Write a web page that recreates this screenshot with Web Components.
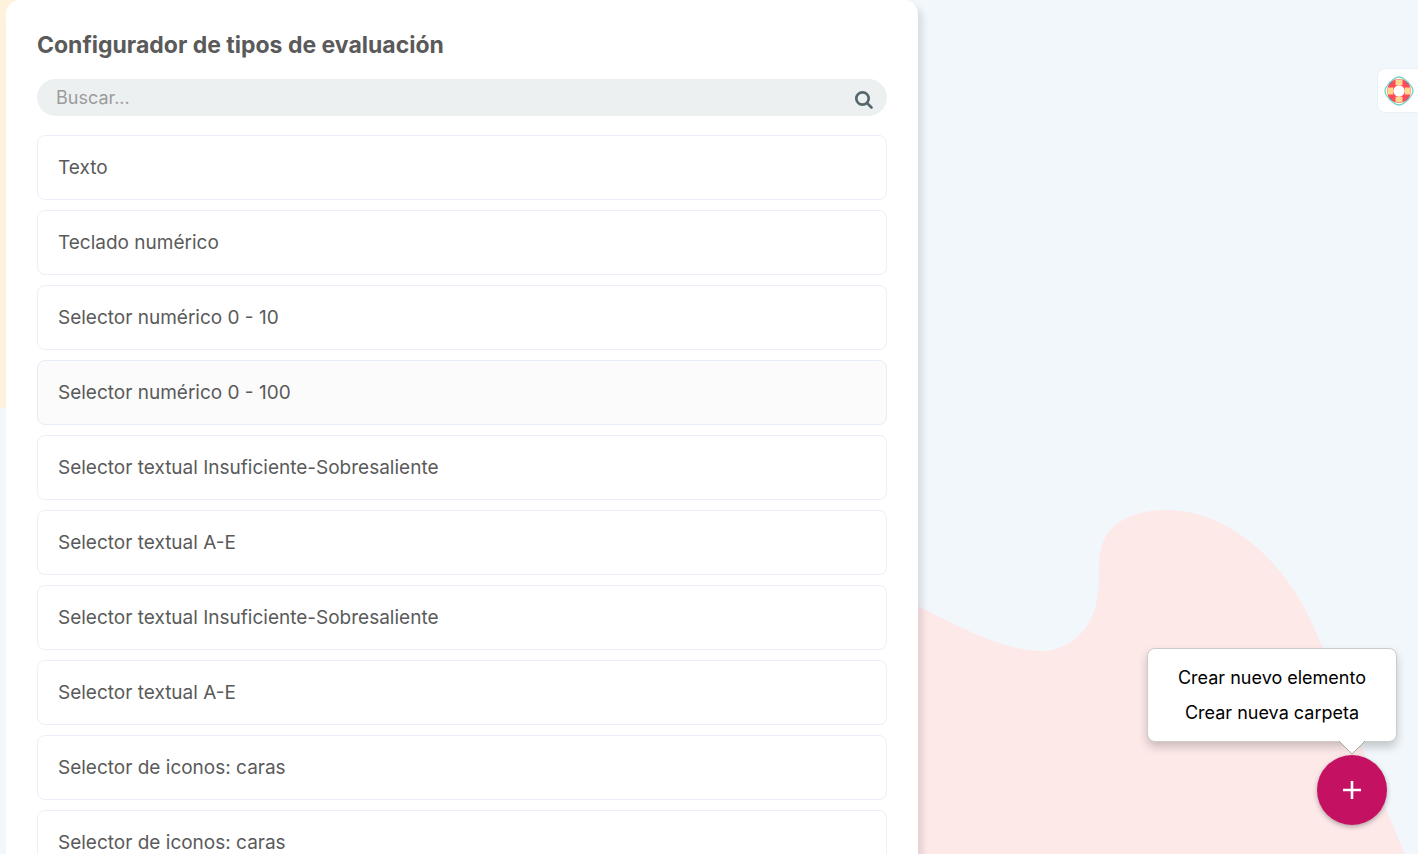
<!DOCTYPE html>
<html lang="es">
<head>
<meta charset="utf-8">
<meta name="viewport" content="width=device-width, initial-scale=1">
<title>Configurador de tipos de evaluación</title>
<style>
  body { margin: 0; font-family: Inter, "Liberation Sans", sans-serif; color: #5a5a5a; }
</style>
</head>
<body>
<evaluation-app>
  <type-panel heading="Configurador de tipos de evaluación">
    <search-field slot="search"></search-field>
    <type-item>Texto</type-item>
    <type-item>Teclado numérico</type-item>
    <type-item>Selector numérico 0 - 10</type-item>
    <type-item active>Selector numérico 0 - 100</type-item>
    <type-item>Selector textual Insuficiente-Sobresaliente</type-item>
    <type-item>Selector textual A-E</type-item>
    <type-item>Selector textual Insuficiente-Sobresaliente</type-item>
    <type-item>Selector textual A-E</type-item>
    <type-item>Selector de iconos: caras</type-item>
    <type-item>Selector de iconos: caras</type-item>
  </type-panel>
  <help-tab slot="overlay"></help-tab>
  <create-menu slot="overlay">
    <menu-option>Crear nuevo elemento</menu-option>
    <menu-option>Crear nueva carpeta</menu-option>
  </create-menu>
</evaluation-app>

<script>
  const define = (name, html, setup) => {
    const template = document.createElement('template');
    template.innerHTML = html;
    customElements.define(name, class extends HTMLElement {
      constructor() {
        super();
        this.attachShadow({ mode: 'open' }).append(template.content.cloneNode(true));
      }
      connectedCallback() {
        if (setup) setup(this, this.shadowRoot);
      }
    });
  };

  define('evaluation-app', `
    <style>
      :host { display: block; position: relative; height: 100vh; overflow: hidden; background: #f1f7fb; }
      .backdrop { position: absolute; display: block; pointer-events: none; }
      .sand { left: 0; top: 0; width: 50%; height: 408px; background: #fef2dc; }
      .wave { right: 0; bottom: 0; width: 518px; height: 354px; }
      main { position: relative; display: grid; height: 100%; box-sizing: border-box; padding-left: 6px;
             grid-template-columns: minmax(0, 912fr) minmax(0, 500fr); }
    </style>
    <div class="backdrop sand"></div>
    <svg class="backdrop wave" viewBox="900 500 518 354" aria-hidden="true">
      <path fill="#fee9e9" d="M900 598 C945 617 995 651 1043 651 C1067 651 1089 631 1095 608 C1102 583 1096 567 1101 549 C1107 522 1134 510 1167 510 C1223 510 1279 554 1309 617 C1341 684 1366 765 1405 854 L900 854 Z"/>
    </svg>
    <main><slot></slot></main>
    <slot name="overlay"></slot>`);

  define('type-panel', `
    <style>
      :host { display: block; box-sizing: border-box; height: 100%; overflow: hidden; padding: 31px 31px 0;
              background: #fff; border-radius: 14px 14px 0 0; box-shadow: 5px 5px 6px rgba(0, 0, 0, .1); }
      h1 { margin: 0 0 20px; font-size: 23px; line-height: 28px; font-weight: 700; }
      .list { display: flex; flex-direction: column; gap: 10px; margin-top: 19px; }
    </style>
    <h1></h1>
    <slot name="search"></slot>
    <div class="list" role="list"><slot></slot></div>`,
    (host, root) => { root.querySelector('h1').textContent = host.getAttribute('heading'); });

  define('search-field', `
    <style>
      :host { display: block; }
      form { display: flex; align-items: center; height: 37px; box-sizing: border-box; padding: 0 13px 0 19px;
             background: #ecf0f1; border-radius: 19px; }
      input { flex: 1; min-width: 0; padding: 0; border: 0; outline: 0; background: none;
              font: inherit; font-size: 18px; line-height: 24px; color: #5a5a5a; }
      input::placeholder { color: #9b9b9b; opacity: 1; }
      button { display: flex; padding: 4px 0 0; border: 0; background: none; color: #56666d; cursor: pointer; }
    </style>
    <form role="search">
      <input type="search" placeholder="Buscar..." aria-label="Buscar">
      <button type="button" aria-label="Iniciar búsqueda">
        <svg width="20" height="20" viewBox="0 0 20 20" fill="none" stroke="currentColor" stroke-width="2.7" aria-hidden="true">
          <circle cx="8.5" cy="8.5" r="6.2"/><path d="M13 13l4.5 4.5" stroke-linecap="round"/>
        </svg>
      </button>
    </form>`);

  define('type-item', `
    <style>
      :host { display: block; }
      button { display: block; width: 100%; height: 65px; box-sizing: border-box; padding: 0 20px; text-align: left;
               border: 1px solid #ebeff9; border-radius: 8px; background: #fff; color: inherit;
               font: inherit; font-size: 19px; line-height: 24px; cursor: pointer; }
      :host([active]) button, button:hover { background: #fbfbfb; border-color: #e6ecf8; }
    </style>
    <button type="button"><slot></slot></button>`,
    host => host.setAttribute('role', 'listitem'));

  define('help-tab', `
    <style>
      :host { position: absolute; right: 0; top: 68px; }
      button { display: flex; align-items: center; width: 41px; height: 45px; padding: 0 0 0 6px; box-sizing: border-box;
               border: 1px solid #eaf0fa; border-right: 0; border-radius: 8px 0 0 8px; background: #fff; cursor: pointer; }
    </style>
    <button type="button" aria-label="Ayuda">
      <svg width="30" height="30" viewBox="0 0 30 30" fill="none" aria-hidden="true">
        <path d="M15 1C20 1 20 4 24 6C26 10 29 10 29 15S26 20 24 24C20 26 20 29 15 29S10 26 6 24C4 20 1 20 1 15S4 10 6 6C10 4 10 1 15 1Z" stroke="#70d3c4" stroke-width="1.3"/>
        <circle cx="15" cy="15" r="8.8" stroke="#ff4b55" stroke-width="6.2"/>
        <g stroke="#ffd791" stroke-width="7">
          <path d="M15 3.4v5.8M15 20.8v5.8M3.4 15h5.8M20.8 15h5.8"/>
        </g>
        <path d="M5.5 8.5l2.5-2.8M22 5.7l2.5 2.8M5.5 21.5l2.5 2.8M22 24.3l2.5-2.8" stroke="#5876c9"/>
      </svg>
    </button>`);

  define('create-menu', `
    <style>
      :host { position: absolute; right: 21px; bottom: 29px; display: flex; flex-direction: column; align-items: flex-end; gap: 13px; }
      .menu { position: relative; display: flex; flex-direction: column; box-sizing: border-box; width: 250px;
              padding: 11px 0; border: 1px solid #ccc; border-radius: 8px; background: #fff;
              box-shadow: 0 5px 10px rgba(0, 0, 0, .2); }
      .arrow { position: absolute; right: 30px; top: 100%; display: block; }
      .fab { display: grid; place-items: center; width: 70px; height: 70px; margin-right: 10px; padding: 0; border: 0;
             border-radius: 50%; background: #c51162; color: #fff; box-shadow: 0 2px 5px rgba(0, 0, 0, .3); cursor: pointer; }
    </style>
    <div class="menu" role="menu">
      <slot></slot>
      <svg class="arrow" width="28" height="14" viewBox="0 0 28 14" aria-hidden="true">
        <path d="M1 0h26L14 13Z" fill="#fff"/><path d="M1 0l13 13L27 0" fill="none" stroke="#aaa"/>
      </svg>
    </div>
    <button class="fab" type="button" aria-label="Crear" aria-expanded="true">
      <svg width="20" height="20" viewBox="0 0 20 20" aria-hidden="true">
        <path d="M10 1v18M1 10h18" stroke="currentColor" stroke-width="2.6"/>
      </svg>
    </button>`);

  define('menu-option', `
    <style>
      :host { display: block; }
      button { display: block; width: 100%; height: 35px; padding: 0; border: 0; background: none; color: #000;
               font: inherit; font-size: 18px; line-height: 24px; text-align: center; cursor: pointer; }
    </style>
    <button type="button" role="menuitem"><slot></slot></button>`);
</script>
</body>
</html>
